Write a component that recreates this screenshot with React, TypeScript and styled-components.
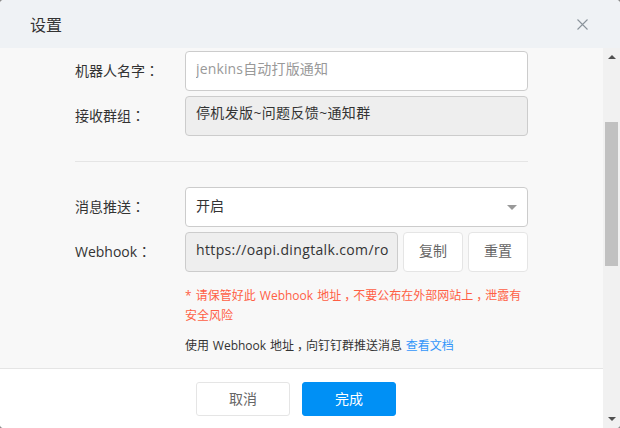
import * as React from 'react';
import styled, { createGlobalStyle } from 'styled-components';

const GlobalStyle = createGlobalStyle`
    html, body {
        margin: 0;
        padding: 0;
        height: 100%;
        overflow: hidden;
        background: #8c8c8c;
    }
    * {
        box-sizing: border-box;
    }
    #root {
        height: 100%;
    }
    body {
        font-family: "Open Sans", "Noto Sans CJK SC", sans-serif;
        font-size: 14px;
        color: #333;
    }
`;

export default function App() {
    return (
        <>
            <GlobalStyle />
            <Dialog>
                <Header>
                    <Title>设置</Title>
                    <CloseButton aria-label="关闭">
                        <svg width="11" height="11" viewBox="0 0 11 11">
                            <path d="M0.5 0.5 L10.5 10.5 M10.5 0.5 L0.5 10.5" stroke="#8a939b" strokeWidth="1.1" fill="none" />
                        </svg>
                    </CloseButton>
                </Header>
                <Columns>
                    <Main>
                        <Body>
                            <Row>
                                <Label>机器人名字<Colon>：</Colon></Label>
                                <TextInput defaultValue="" placeholder="jenkins自动打版通知" />
                            </Row>
                            <Row>
                                <Label>接收群组<Colon>：</Colon></Label>
                                <ReadOnlyField>停机发版~问题反馈~通知群</ReadOnlyField>
                            </Row>
                            <Divider />
                            <Row>
                                <Label>消息推送<Colon>：</Colon></Label>
                                <Select>
                                    开启
                                    <Caret />
                                </Select>
                            </Row>
                            <Row>
                                <Label>Webhook<Colon>：</Colon></Label>
                                <ReadOnlyField $url>https://oapi.dingtalk.com/ro</ReadOnlyField>
                                <SmallButton>复制</SmallButton>
                                <SmallButton>重置</SmallButton>
                            </Row>
                            <Warning>
                                * 请保管好此 Webhook 地址<Comma>，</Comma>不要公布在外部网站上<Comma>，</Comma>泄露有安全风险
                            </Warning>
                            <Hint>
                                使用 Webhook 地址<Comma>，</Comma>向钉钉群推送消息 <DocLink href="#">查看文档</DocLink>
                            </Hint>
                        </Body>
                        <Footer>
                            <CancelButton>取消</CancelButton>
                            <DoneButton>完成</DoneButton>
                        </Footer>
                    </Main>
                    <Scrollbar>
                        <ArrowUp />
                        <Thumb />
                        <ArrowDown />
                    </Scrollbar>
                </Columns>
            </Dialog>
        </>
    );
}

const Dialog = styled.div`
    height: 100%;
    display: flex;
    flex-direction: column;
    background: #fff;
    border-radius: 4px;
    overflow: hidden;
`;

const Header = styled.div`
    height: 48px;
    flex: none;
    display: flex;
    align-items: center;
    justify-content: space-between;
    padding: 0 32px 0 30px;
    background: #eff2f5;
`;

const Title = styled.div`
    font-size: 16px;
    color: #333;
`;

const CloseButton = styled.div`
    display: flex;
    width: 11px;
    height: 11px;
`;

const Columns = styled.div`
    flex: 1;
    min-height: 0;
    display: flex;
`;

const Main = styled.div`
    flex: 1;
    min-width: 0;
    display: flex;
    flex-direction: column;
`;

const Body = styled.div`
    flex: 1;
    min-height: 0;
    background: #f8f8f8;
    padding: 3px 75px 0;
`;

const Row = styled.div`
    display: flex;
    align-items: center;
    gap: 5px;
    height: 40px;
    margin-bottom: 5px;
`;

const Label = styled.div`
    width: 105px;
    flex: none;
    color: #333;
    font-size: 14px;
    padding-bottom: 3px;
`;

const Colon = styled.span`
    font-family: "Noto Sans CJK TC", sans-serif;
`;

const Comma = styled.span`
    font-feature-settings: "halt";
    padding: 0 3px;
`;

const TextInput = styled.input`
    flex: 1;
    min-width: 0;
    height: 40px;
    padding: 0 10px 5px;
    background: #fff;
    border: 1px solid #ccc;
    border-radius: 4px;
    outline: none;
    font: inherit;
    letter-spacing: 0.15px;
    color: #333;

    &::placeholder {
        color: #999;
        opacity: 1;
    }
`;

const ReadOnlyField = styled.div<{ $url?: boolean }>`
    flex: ${(p) => (p.$url ? 'none' : '1')};
    width: ${(p) => (p.$url ? '213px' : 'auto')};
    height: 40px;
    line-height: ${(p) => (p.$url ? '34px' : '32px')};
    padding: 0 0 0 10px;
    background: #eee;
    border: 1px solid #ccc;
    border-radius: 4px;
    white-space: nowrap;
    color: #333;
    letter-spacing: ${(p) => (p.$url ? '0.36px' : '0.35px')};
`;

const Divider = styled.div`
    height: 1px;
    background: #e5e5e5;
    margin: 25px 0;
`;

const Select = styled.div`
    flex: 1;
    height: 40px;
    display: flex;
    align-items: center;
    justify-content: space-between;
    padding: 0 10px 5px;
    background: #fff;
    border: 1px solid #ccc;
    border-radius: 4px;
    color: #333;
`;

const Caret = styled.span`
    width: 0;
    height: 0;
    margin-top: 5px;
    border-left: 5px solid transparent;
    border-right: 5px solid transparent;
    border-top: 5px solid #999;
`;

const SmallButton = styled.div`
    flex: none;
    width: 60px;
    height: 40px;
    display: flex;
    align-items: center;
    justify-content: center;
    padding-bottom: 5px;
    background: #fff;
    border: 1px solid #e5e5e5;
    border-radius: 4px;
    color: #666;
`;

const Warning = styled.div`
    width: 343px;
    margin: 14px 0 0 110px;
    font-size: 12px;
    line-height: 20px;
    word-spacing: 1px;
    color: #ff5f45;
`;

const Hint = styled.div`
    margin: 10px 0 0 110px;
    font-size: 12px;
    line-height: 20px;
    word-spacing: 0.7px;
    color: #333;
    white-space: nowrap;
`;

const DocLink = styled.a`
    color: #3296fa;
    text-decoration: none;
`;

const Footer = styled.div`
    height: 60px;
    flex: none;
    display: flex;
    justify-content: center;
    gap: 12px;
    padding: 13px 11px 0 0;
    background: #fff;
    border-top: 1px solid #e5e5e5;
`;

const CancelButton = styled.div`
    width: 94px;
    height: 34px;
    display: flex;
    align-items: center;
    justify-content: center;
    padding-bottom: 3px;
    background: #fff;
    border: 1px solid #e5e5e5;
    border-radius: 3px;
    font-size: 14px;
    color: #666;
`;

const DoneButton = styled(CancelButton)`
    background: #0090f5;
    border-color: #0090f5;
    color: #fff;
`;

const Scrollbar = styled.div`
    width: 17px;
    flex: none;
    display: flex;
    flex-direction: column;
    align-items: center;
    background: #f1f1f1;
`;

const ArrowUp = styled.span`
    width: 0;
    height: 0;
    margin: 7px 0 63px;
    border-left: 4px solid transparent;
    border-right: 4px solid transparent;
    border-bottom: 4px solid #505050;
`;

const Thumb = styled.div`
    width: 13px;
    height: 144px;
    background: #c1c1c1;
`;

const ArrowDown = styled.span`
    width: 0;
    height: 0;
    margin-top: auto;
    margin-bottom: 7px;
    border-left: 4px solid transparent;
    border-right: 4px solid transparent;
    border-top: 4px solid #505050;
`;
